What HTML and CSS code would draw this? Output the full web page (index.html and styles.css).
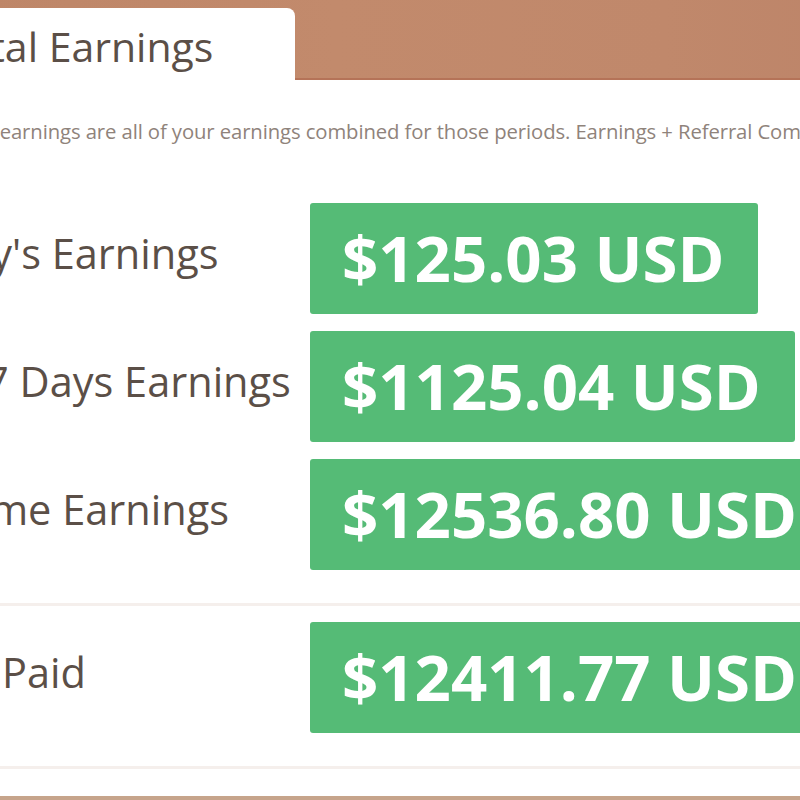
FILE: index.html
```html
<!DOCTYPE html>
<html lang="en">
<head>
<meta charset="utf-8">
<title>Total Earnings</title>
<link rel="stylesheet" href="styles.css">
</head>
<body>
<div class="page">
  <div class="band">
    <div class="tab">Total Earnings</div>
  </div>
  <p class="desc">Total earnings are all of your earnings combined for those periods. Earnings + Referral Commissions.</p>
  <div class="group group-first">
    <div class="row">
      <div class="label">Today's Earnings</div>
      <div class="amount">$125.03 USD</div>
    </div>
    <div class="row">
      <div class="label">Last 7 Days Earnings</div>
      <div class="amount">$1125.04 USD</div>
    </div>
    <div class="row">
      <div class="label">Lifetime Earnings</div>
      <div class="amount">$12536.80 USD</div>
    </div>
  </div>
  <div class="group group-second">
    <div class="row">
      <div class="label">Total Paid</div>
      <div class="amount">$12411.77 USD</div>
    </div>
  </div>
  <div class="foot"></div>
</div>
</body>
</html>
```

FILE: styles.css
```css
html, body {
  margin: 0;
  padding: 0;
  background: #ffffff;
  overflow: hidden;
}

body {
  font-family: "Open Sans", "Noto Sans", sans-serif;
  color: #5b4f47;
}

.page {
  margin-left: -105px;
  width: 1100px;
}

.band {
  height: 78px;
  border-bottom: 2px solid #b57358;
  background: linear-gradient(90deg, #bd8567 0%, #c28a6c 40%, #c0886b 70%, #bb8268 100%);
  display: flex;
  align-items: flex-end;
}

.tab {
  width: 400px;
  height: 72px;
  margin-bottom: -2px;
  box-sizing: border-box;
  background: #ffffff;
  border-radius: 8px 8px 0 0;
  padding: 4px 0 0 48px;
  font-size: 41px;
  line-height: 68px;
  color: #5b4f47;
  white-space: nowrap;
}

.desc {
  margin: 38px 0 0;
  padding-left: 53px;
  font-size: 20.3px;
  line-height: 26px;
  letter-spacing: -0.1px;
  color: #8f837b;
  white-space: nowrap;
}

.group {
  display: flex;
  flex-direction: column;
  gap: 17px;
  border-bottom: 3px solid #f5efec;
  padding-bottom: 33px;
}

.group-first {
  margin-top: 59px;
}

.group-second {
  padding-top: 16px;
}

.row {
  display: flex;
  align-items: center;
}

.label {
  width: 415px;
  flex: none;
  padding-bottom: 12px;
  font-size: 41.5px;
  color: #5b4f47;
  white-space: nowrap;
}

.amount {
  flex: none;
  height: 111px;
  box-sizing: border-box;
  padding: 0 34px 0 32px;
  background: #55bb76;
  border-radius: 3px;
  color: #ffffff;
  font-weight: 700;
  font-size: 63.5px;
  line-height: 110px;
  white-space: nowrap;
}

.foot {
  margin-top: 27px;
  height: 4px;
  background: #c6a48b;
}
```
